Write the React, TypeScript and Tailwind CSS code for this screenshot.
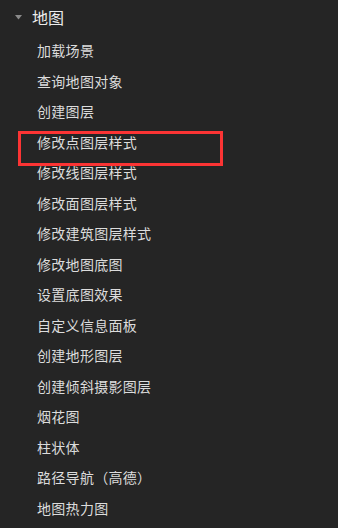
import React from 'react';

const items = [
  '加载场景',
  '查询地图对象',
  '创建图层',
  '修改点图层样式',
  '修改线图层样式',
  '修改面图层样式',
  '修改建筑图层样式',
  '修改地图底图',
  '设置底图效果',
  '自定义信息面板',
  '创建地形图层',
  '创建倾斜摄影图层',
  '烟花图',
  '柱状体',
  '路径导航（高德）',
  '地图热力图',
];

const App: React.FC = () => {
  return (
    <div
      className="relative w-[338px] h-[528px] bg-[#252525] overflow-hidden"
      style={{ fontFamily: '"Noto Sans CJK SC", "Liberation Sans", sans-serif' }}
    >
      {/* group header */}
      <div className="flex items-center h-[33px] pl-[15px]">
        <svg width="7" height="5" viewBox="0 0 7 5" className="mt-[2px]">
          <path d="M0 0 H7 L3.5 4.5 Z" fill="#8a8a8a" />
        </svg>
        <span className="ml-[10px] text-[16px] text-[#ececec] leading-none">地图</span>
      </div>

      {/* menu items */}
      <ul className="pt-[2px]">
        {items.map((label) => (
          <li
            key={label}
            className="h-[30.5px] flex items-center pl-[37px] text-[14px] tracking-[0.3px] text-[#dcdcdc] leading-none"
          >
            {label}
          </li>
        ))}
      </ul>

      {/* highlight annotation */}
      <div className="absolute left-[18px] top-[131px] w-[205px] h-[35px] border-[3px] border-[#fc3434]" />
    </div>
  );
};

export default App;
